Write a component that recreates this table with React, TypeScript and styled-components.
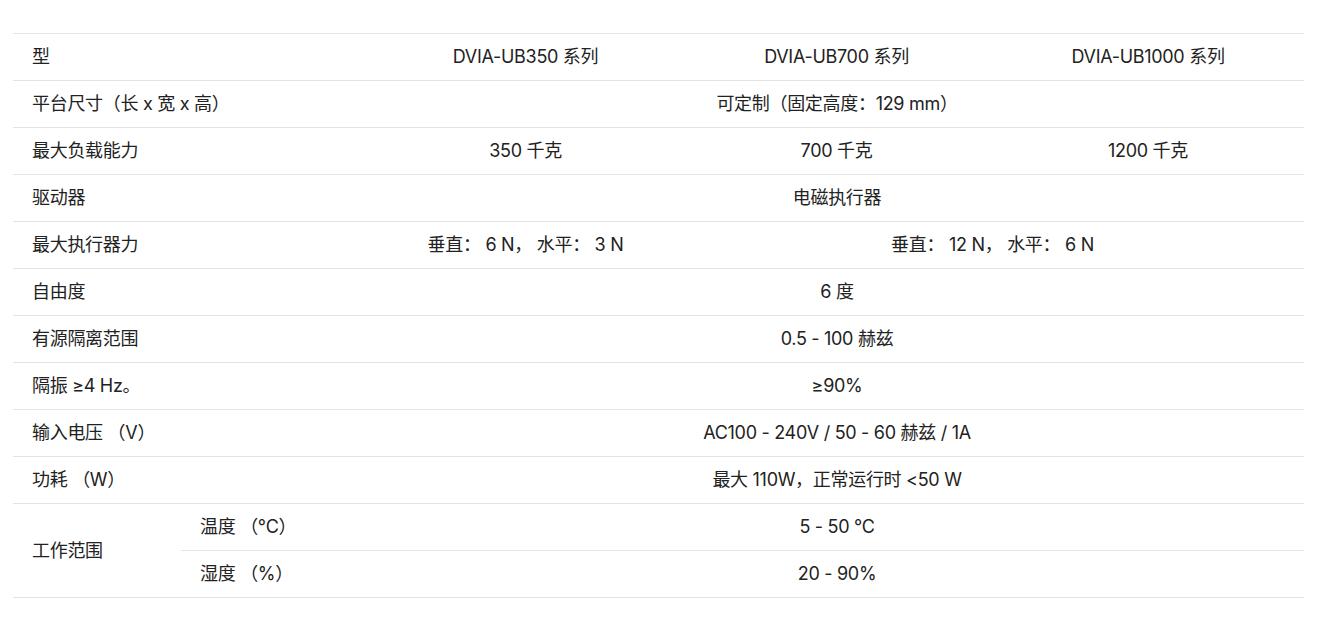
import React from "react";
import styled, { createGlobalStyle } from "styled-components";

const Global = createGlobalStyle`
  html, body { margin: 0; padding: 0; background: #ffffff; }
  body {
    font-family: Inter, "Noto Sans CJK SC", "Noto Sans", sans-serif;
    color: #222222;
    -webkit-font-smoothing: antialiased;
  }
`;

const Page = styled.div`
  padding: 33px 26px 20px 13px;
`;

const Table = styled.table`
  width: 1291px;
  border-collapse: collapse;
  table-layout: fixed;
  font-size: 18px;
  line-height: 24px;
  letter-spacing: -0.3px;
  border-top: 1px solid #e3e3e3;
`;

const Row = styled.tr`
  height: 47px;
`;

const Cell = styled.td<{ $align?: "left" | "center" }>`
  padding: 0 19px;
  height: 46px;
  border-bottom: 1px solid #e3e3e3;
  text-align: ${(p) => p.$align ?? "center"};
  vertical-align: middle;
  font-weight: 400;
  white-space: pre;
`;

const Label = styled(Cell).attrs({ $align: "left" as const })``;

type Spec = { label: string; values: { text: string; span?: number }[] };

const specs: Spec[] = [
  {
    label: "型",
    values: [
      { text: "DVIA-UB350 系列" },
      { text: "DVIA-UB700 系列" },
      { text: "DVIA-UB1000 系列" },
    ],
  },
  { label: "平台尺寸（长 x 宽 x 高）", values: [{ text: "可定制（固定高度：129 mm）", span: 3 }] },
  {
    label: "最大负载能力",
    values: [{ text: "350 千克" }, { text: "700 千克" }, { text: "1200 千克" }],
  },
  { label: "驱动器", values: [{ text: "电磁执行器", span: 3 }] },
  {
    label: "最大执行器力",
    values: [
      { text: "垂直： 6 N， 水平： 3 N" },
      { text: "垂直： 12 N， 水平： 6 N", span: 2 },
    ],
  },
  { label: "自由度", values: [{ text: "6 度", span: 3 }] },
  { label: "有源隔离范围", values: [{ text: "0.5 - 100 赫兹", span: 3 }] },
  { label: "隔振 ≥4 Hz。", values: [{ text: "≥90%", span: 3 }] },
  { label: "输入电压 （V）", values: [{ text: "AC100 - 240V / 50 - 60 赫兹 / 1A", span: 3 }] },
  { label: "功耗 （W）", values: [{ text: "最大 110W，正常运行时 <50 W", span: 3 }] },
];

export default function App() {
  return (
    <>
      <Global />
      <Page>
        <Table>
          <colgroup>
            <col style={{ width: 168 }} />
            <col style={{ width: 189 }} />
            <col style={{ width: 311 }} />
            <col style={{ width: 311 }} />
            <col style={{ width: 312 }} />
          </colgroup>
          <tbody>
            {specs.map((s) => (
              <Row key={s.label}>
                <Label colSpan={2}>{s.label}</Label>
                {s.values.map((v, i) => (
                  <Cell key={i} colSpan={v.span ?? 1}>
                    {v.text}
                  </Cell>
                ))}
              </Row>
            ))}
            <Row>
              <Label rowSpan={2}>工作范围</Label>
              <Label>温度 （°C）</Label>
              <Cell colSpan={3}>5 - 50 °C</Cell>
            </Row>
            <Row>
              <Label>湿度 （%）</Label>
              <Cell colSpan={3}>20 - 90%</Cell>
            </Row>
          </tbody>
        </Table>
      </Page>
    </>
  );
}
